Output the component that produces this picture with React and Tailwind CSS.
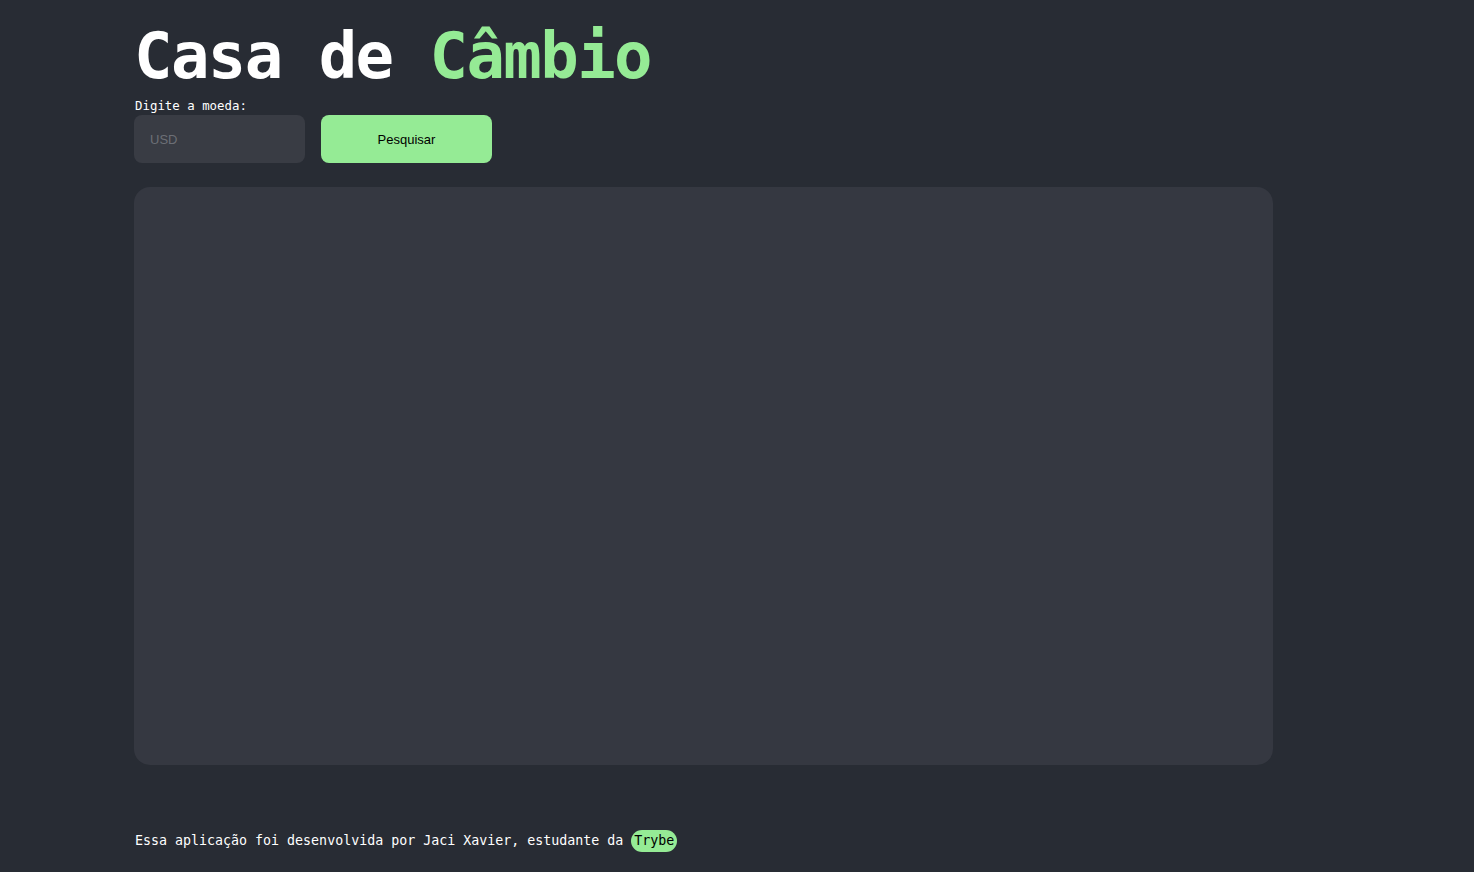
import React, { useState } from 'react';

const mono = { fontFamily: '"DejaVu Sans Mono", "Liberation Mono", monospace' };

const App = () => {
  const [moeda, setMoeda] = useState('');

  return (
    <div className="min-h-[872px] w-full bg-[#282c34] text-white" style={mono}>
      <div className="pl-[134px] pr-[201px]">
        {/* Cabeçalho */}
        <h1 className="pt-[24px] text-[64px] font-bold leading-[64px] tracking-[-1.6px]">
          Casa de <span className="text-[#95eb95]">Câmbio</span>
        </h1>

        {/* Busca */}
        <label className="mt-[10px] block pl-[1px] text-[12.4px] leading-[16px] text-white">
          Digite a moeda:
        </label>
        <div className="mt-[1px] flex gap-[16px]">
          <input
            value={moeda}
            onChange={(e) => setMoeda(e.target.value)}
            placeholder="USD"
            className="h-[48px] w-[171px] rounded-[8px] bg-[#393c44] px-[16px] pt-[1px] text-[13px] text-white outline-none placeholder:text-[#6c6f76]"
            style={{ fontFamily: '"Liberation Sans", Arial, sans-serif' }}
          />
          <button
            className="h-[48px] w-[171px] rounded-[8px] bg-[#95eb95] pt-[2px] text-[13px] text-black"
            style={{ fontFamily: '"Liberation Sans", Arial, sans-serif' }}
          >
            Pesquisar
          </button>
        </div>

        {/* Resultados */}
        <div className="mt-[24px] h-[578px] w-[1139px] rounded-[16px] bg-[#353841]" />

        {/* Rodapé */}
        <footer className="mt-[65px] flex items-center pl-[1px] text-[13.3px] leading-[22px] text-white">
          <span className="whitespace-pre">Essa aplicação foi desenvolvida por Jaci Xavier, estudante da </span>
          <span className="rounded-full bg-[#95eb95] px-[3px] text-black">Trybe</span>
        </footer>
      </div>
    </div>
  );
};

export default App;
